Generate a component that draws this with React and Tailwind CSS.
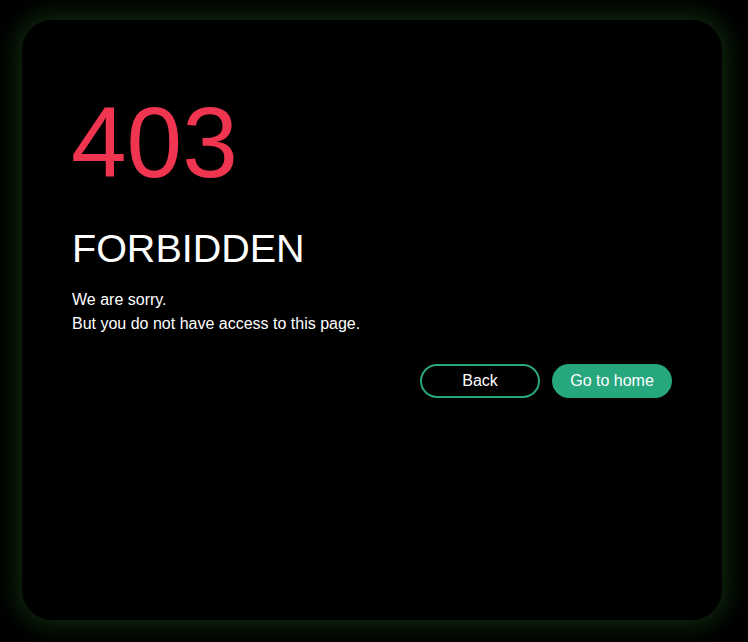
export default function App() {
  return (
    <div
      className="w-[748px] h-[642px] bg-black pt-[20px] pl-[22px]"
      style={{ fontFamily: '"Liberation Sans", Arial, sans-serif' }}
    >
      <div className="w-[700px] h-[600px] bg-black rounded-[30px] shadow-[0_0_24px_6px_rgba(30,90,30,0.45)] px-[50px] pt-[72px] flex flex-col">
        <div className="text-[100px] leading-none text-[#ef3550] ml-[-1px]">403</div>
        <div className="text-[39.5px] leading-none text-white mt-[37px]">FORBIDDEN</div>
        <div className="text-[16px] leading-[24px] text-white mt-[19px]">
          <div>We are sorry.</div>
          <div>But you do not have access to this page.</div>
        </div>
        <div className="flex justify-end gap-[12px] mt-[28px]">
          <button className="w-[120px] h-[34px] rounded-full border-2 border-[#26a77e] text-white text-[16px] leading-none flex items-center justify-center">
            Back
          </button>
          <button className="w-[120px] h-[34px] rounded-full bg-[#26a77e] text-white text-[16px] leading-none flex items-center justify-center">
            Go to home
          </button>
        </div>
      </div>
    </div>
  );
}
